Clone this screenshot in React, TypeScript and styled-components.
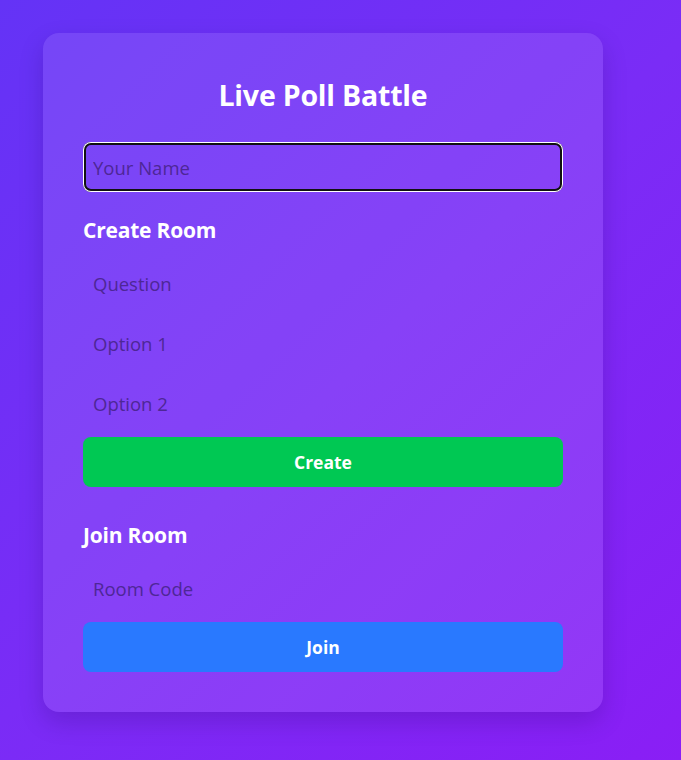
import React from "react";
import styled, { createGlobalStyle } from "styled-components";

const Global = createGlobalStyle`
  html, body { margin: 0; padding: 0; }
  body {
    font-family: "Open Sans", "Noto Sans", "Liberation Sans", sans-serif;
    background: linear-gradient(135deg, #6433f6 0%, #7a2cf6 50%, #8a1ef5 100%);
    min-height: 760px;
  }
  * { box-sizing: border-box; }
`;

const Page = styled.div`
  padding: 33px 0 48px 43px;
  min-height: 760px;
`;

const Card = styled.div`
  width: 560px;
  padding: 40px;
  border-radius: 16px;
  background: rgba(255, 255, 255, 0.1);
  box-shadow: 0 10px 25px rgba(30, 0, 90, 0.2);
  display: flex;
  flex-direction: column;
`;

const Title = styled.h1`
  margin: 0 0 25px;
  font-size: 28.5px;
  line-height: 44px;
  font-weight: 700;
  color: #fff;
  text-align: center;
  letter-spacing: -0.2px;
`;

const Heading = styled.h2<{ $top: number }>`
  margin: ${(p) => p.$top}px 0 14px;
  font-size: 21px;
  line-height: 28px;
  font-weight: 700;
  color: #fff;
  letter-spacing: -0.2px;
`;

const Input = styled.input<{ $focused?: boolean }>`
  display: block;
  width: 100%;
  height: 50px;
  padding: 0 10px;
  border: none;
  border-radius: 8px;
  background: transparent;
  font-family: inherit;
  font-size: 18.5px;
  color: #fff;
  outline: none;
  box-shadow: ${(p) =>
    p.$focused ? "inset 0 0 0 1px #ffffff, inset 0 0 0 3px #111111" : "none"};
  & + & { margin-top: 10px; }
  &::placeholder { color: #4e2796; }
`;

const Button = styled.button<{ $color: string; $top: number }>`
  display: block;
  width: 100%;
  height: 50px;
  margin-top: ${(p) => p.$top}px;
  border: none;
  border-radius: 8px;
  background: ${(p) => p.$color};
  color: #fff;
  font-family: inherit;
  font-size: 17.5px;
  font-weight: 700;
  cursor: pointer;
`;

export default function App() {
  return (
    <>
      <Global />
      <Page>
        <Card>
          <Title>Live Poll Battle</Title>
          <Input $focused placeholder="Your Name" />
          <Heading $top={24}>Create Room</Heading>
          <Input placeholder="Question" />
          <Input placeholder="Option 1" />
          <Input placeholder="Option 2" />
          <Button $color="#00c853" $top={9}>Create</Button>
          <Heading $top={34}>Join Room</Heading>
          <Input placeholder="Room Code" />
          <Button $color="#2979ff" $top={9}>Join</Button>
        </Card>
      </Page>
    </>
  );
}
